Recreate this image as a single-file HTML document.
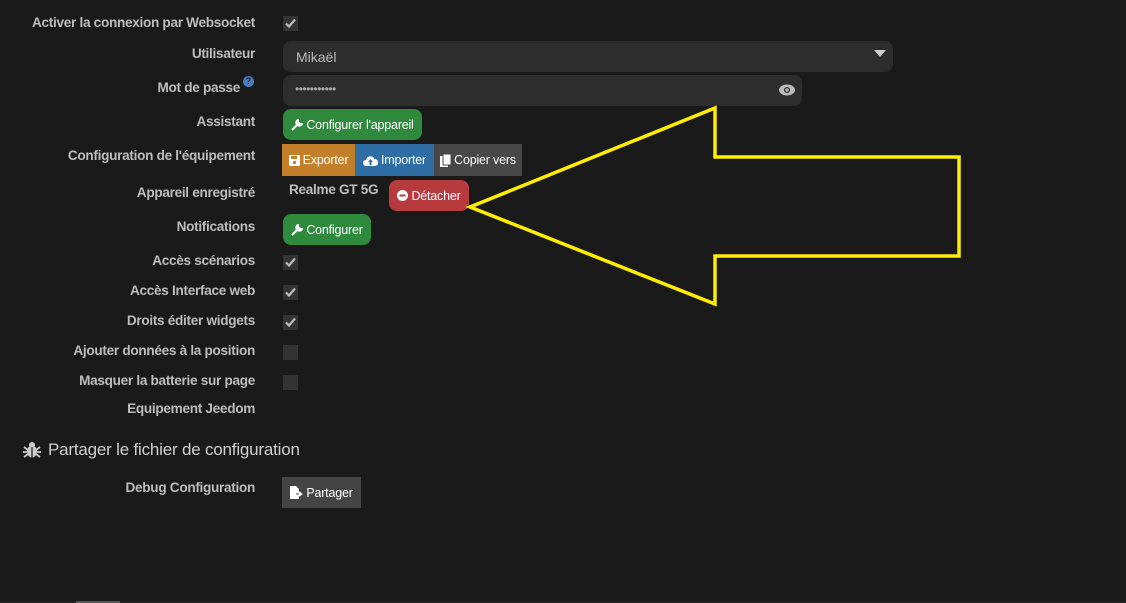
<!DOCTYPE html>
<html><head><meta charset="utf-8"><style>
body{margin:0;width:1126px;height:603px;background:#1a1a1a;font-family:"Liberation Sans",sans-serif;overflow:hidden;position:relative}
.l{position:absolute;right:871px;color:#bdbdbd;font-size:13.6px;font-weight:bold;white-space:nowrap;line-height:16px;letter-spacing:-0.3px}
.cb{position:absolute;left:283px;width:15px;height:15px;background:#333}
.cb svg{position:absolute;left:1px;top:1px}
.b{position:absolute;color:#fff;font-size:12.5px;display:flex;align-items:center;justify-content:center;white-space:nowrap;letter-spacing:-0.2px}
.b svg{margin-right:3px}
.in{position:absolute;background:#2d2d2d;border-radius:8px;color:#bbb;font-size:14px}
</style></head><body>
<div class="l" style="top:15px">Activer la connexion par Websocket</div>
<div class="l" style="top:46px">Utilisateur</div>
<div class="l" style="top:80px;right:886px">Mot de passe</div>
<div style="position:absolute;left:243px;top:76px;width:11px;height:11px;border-radius:50%;background:#4a7fc0;color:#1a1a1a;font-size:9px;font-weight:bold;text-align:center;line-height:11px">?</div>
<div class="l" style="top:114px">Assistant</div>
<div class="l" style="top:148px">Configuration de l'équipement</div>
<div class="l" style="top:185px">Appareil enregistré</div>
<div class="l" style="top:219px">Notifications</div>
<div class="l" style="top:253px">Accès scénarios</div>
<div class="l" style="top:283px">Accès Interface web</div>
<div class="l" style="top:313px">Droits éditer widgets</div>
<div class="l" style="top:343px">Ajouter données à la position</div>
<div class="l" style="top:373px">Masquer la batterie sur page</div>
<div class="l" style="top:401px">Equipement Jeedom</div>
<div class="l" style="top:480px">Debug Configuration</div>

<div class="cb" style="top:16px"><svg width="13" height="13" viewBox="0 0 13 13"><path d="M2 6.5l3 3 6-7" stroke="#bbb" stroke-width="2.2" fill="none"/></svg></div>
<div class="cb" style="top:255px"><svg width="13" height="13" viewBox="0 0 13 13"><path d="M2 6.5l3 3 6-7" stroke="#bbb" stroke-width="2.2" fill="none"/></svg></div>
<div class="cb" style="top:285px"><svg width="13" height="13" viewBox="0 0 13 13"><path d="M2 6.5l3 3 6-7" stroke="#bbb" stroke-width="2.2" fill="none"/></svg></div>
<div class="cb" style="top:315px"><svg width="13" height="13" viewBox="0 0 13 13"><path d="M2 6.5l3 3 6-7" stroke="#bbb" stroke-width="2.2" fill="none"/></svg></div>
<div class="cb" style="top:345px"></div>
<div class="cb" style="top:375px"></div>

<div class="in" style="left:283px;top:41px;width:610px;height:31px"><span style="position:absolute;left:13px;top:8px">Mikaël</span><svg style="position:absolute;right:7px;top:9px" width="12" height="7"><path d="M0 0h12l-6 7z" fill="#ccc"/></svg></div>
<div class="in" style="left:283px;top:75px;width:519px;height:31px"><span style="position:absolute;left:12px;top:7px;letter-spacing:-0.5px;font-size:12px;color:#aaa">•••••••••••</span><svg style="position:absolute;right:7px;top:9px" width="16" height="12" viewBox="0 0 16 12"><ellipse cx="8" cy="6" rx="8" ry="5.5" fill="#bbb"/><circle cx="8" cy="6" r="3" fill="#2d2d2d"/><circle cx="8" cy="6" r="1.7" fill="#bbb"/></svg></div>

<div class="b" style="left:283px;top:109px;width:139px;height:31px;background:#2f8a3e;border-radius:8px"><svg width="12" height="12" viewBox="0 0 12 12"><path d="M1 11l5-5M7 1a3 3 0 1 0 4 4l-2 0-2-2z" stroke="#fff" stroke-width="2" fill="#fff"/></svg>Configurer l'appareil</div>
<div class="b" style="left:282px;top:144px;width:73px;height:32px;background:#c47f2a"><svg width="11" height="11"><rect width="11" height="11" rx="1.5" fill="#fff"/><rect x="2" y="1" width="6" height="3" fill="#c47f2a"/><circle cx="5.5" cy="7.5" r="1.6" fill="#c47f2a"/></svg>Exporter</div>
<div class="b" style="left:355px;top:144px;width:79px;height:32px;background:#2f6ea5"><svg width="15" height="11" viewBox="0 0 15 11"><path d="M3 11a3 3 0 0 1 0-6a4.5 4.5 0 0 1 8.5-1a3.5 3.5 0 0 1 0.5 7z" fill="#fff"/><path d="M7.5 4l-2.5 3h1.6v3h1.8v-3h1.6z" fill="#2f6ea5"/></svg>Importer</div>
<div class="b" style="left:434px;top:144px;width:88px;height:32px;background:#484848"><svg width="11" height="13"><rect x="0" y="2" width="8" height="11" fill="#fff"/><rect x="3" y="0" width="8" height="11" fill="#fff" stroke="#484848"/></svg>Copier vers</div>
<div style="position:absolute;left:289px;top:182px;color:#bdbdbd;font-size:13.6px;font-weight:bold;letter-spacing:-0.3px">Realme GT 5G</div>
<div class="b" style="left:389px;top:180px;width:80px;height:31px;background:#b73a3f;border-radius:8px"><svg width="11" height="11"><circle cx="5.5" cy="5.5" r="5.5" fill="#fff"/><rect x="2.5" y="4.5" width="6" height="2" fill="#b73a3f"/></svg>Détacher</div>
<div class="b" style="left:283px;top:214px;width:88px;height:31px;background:#2f8a3e;border-radius:8px"><svg width="12" height="12" viewBox="0 0 12 12"><path d="M1 11l5-5M7 1a3 3 0 1 0 4 4l-2 0-2-2z" stroke="#fff" stroke-width="2" fill="#fff"/></svg>Configurer</div>

<svg style="position:absolute;left:23px;top:441px" width="18" height="18" viewBox="0 0 18 18"><ellipse cx="9" cy="10.5" rx="5" ry="6" fill="#ccc"/><circle cx="9" cy="4" r="3" fill="#ccc"/><path d="M1 6l4 3M17 6l-4 3M0 11h4M18 11h-4M1 16l4-3M17 16l-4-3" stroke="#ccc" stroke-width="1.8"/><rect x="8.4" y="6" width="1.2" height="11" fill="#1a1a1a"/></svg>
<div style="position:absolute;left:48px;top:440px;color:#cfcfcf;font-size:17px;letter-spacing:-0.2px">Partager le fichier de configuration</div>
<div class="b" style="left:282px;top:477px;width:79px;height:31px;background:#444"><svg width="13" height="13" viewBox="0 0 13 13"><path d="M0 0h6l3 3v10H0z" fill="#fff"/><path d="M6 8h5M9 6l2.5 2-2.5 2" stroke="#fff" stroke-width="1.5" fill="none"/><path d="M6 8h3" stroke="#444" stroke-width="1"/></svg>Partager</div>

<svg style="position:absolute;left:0;top:0" width="1126" height="603"><polygon points="470,207 715,108 715,157 959,157 959,256 715,256 715,304" fill="none" stroke="#ffee00" stroke-width="3.5" stroke-linejoin="miter"/></svg>
<div style="position:absolute;left:0;top:601px;width:1126px;height:2px;background:#222"></div>
<div style="position:absolute;left:76px;top:601px;width:44px;height:2px;background:#555"></div>
</body></html>
